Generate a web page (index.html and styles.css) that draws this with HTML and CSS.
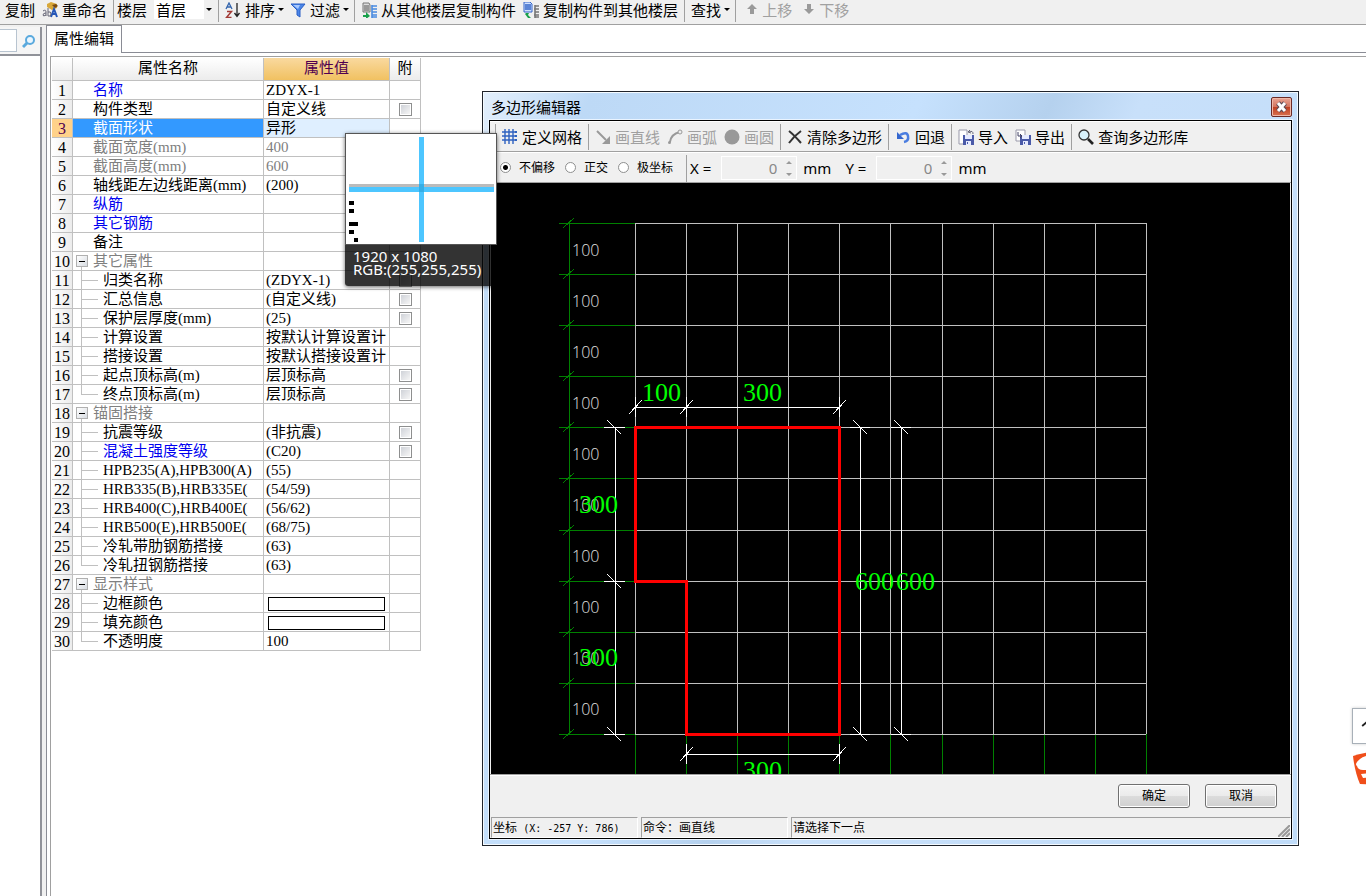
FILE: index.html
```html
<!DOCTYPE html>
<html lang="zh-CN">
<head>
<meta charset="utf-8">
<title>属性编辑</title>
<link rel="stylesheet" href="styles.css">
</head>
<body>
<header class="toolbar main-toolbar">
  <button type="button">复制</button>
  <button type="button"><svg class="icon" viewBox="0 0 16 16"><path d="M5 2l4-2 6 2v4l-5 2-5-3z" fill="#d8a83a"/><path d="M10 3l4-1 2 2-3 2z" fill="#7a4a10"/><path d="M9 15l3-8 3 8M10 12h4" fill="none" stroke="#2456b8" stroke-width="2"/><path d="M1 9q3-2 3 1v4M4 11q-3 0-3 2t3 0M6 6v8M6 10q3-1 3 2t-3 2" fill="none" stroke="#667"/></svg><span>重命名</span></button>
  <span class="sep"></span>
  <label for="floor">楼层</label>
  <span class="floor-box"><select id="floor"><option>首层</option></select><i class="caret"></i></span>
  <span class="sep"></span>
  <button type="button"><svg class="icon" viewBox="0 0 16 16"><path d="M1 7l3-6 3 6M2 5h4" fill="none" stroke="#3465ad" stroke-width="1.3"/><path d="M2 9.500h4.500l-5 6h5" fill="none" stroke="#a23a35" stroke-width="1.500"/><path d="M12 1v13M9.500 11l2.500 3.500 2.500-3.500" fill="none" stroke="#222" stroke-width="1.300"/></svg><span>排序</span><i class="caret"></i></button>
  <button type="button"><svg class="icon" viewBox="0 0 16 16"><path d="M1 2h14l-5 6v7l-3-2V8z" fill="#4b86e8" stroke="#2b5fc4"/><path d="M3 3h7L8 7z" fill="#a9caff"/></svg><span>过滤</span><i class="caret"></i></button>
  <span class="sep"></span>
  <button type="button"><svg class="icon" viewBox="0 0 16 16"><path d="M2 1h6l1 2v7H2z" fill="#ddd" stroke="#777"/><path d="M3 4h5M3 6h5M3 8h5" stroke="#555"/><path d="M2 13h3v-3l4 4-4 3v-2H2z" fill="#19a04b"/><path d="M11 3v13M11 4h5M11 7h5M11 10h5M11 13h5M11 15h5" stroke="#4a8be0" stroke-width="1.600"/></svg><span>从其他楼层复制构件</span></button>
  <button type="button"><svg class="icon" viewBox="0 0 16 16"><path d="M1 0h6l2 2v8H1z" fill="#cfe0ff" stroke="#3465c8"/><path d="M2 3h6M2 5h6M2 7h6" stroke="#3465c8" stroke-width="1.400"/><path d="M8 16H5l-3-4 1-1h3l-1 2z" fill="#19a04b"/><path d="M12 3v13M12 4h4M11 7h5M12 10h4M11 13h5M12 15h4" stroke="#777" stroke-width="1.600"/></svg><span>复制构件到其他楼层</span></button>
  <span class="sep"></span>
  <button type="button"><span>查找</span><i class="caret"></i></button>
  <span class="sep"></span>
  <button type="button" disabled><svg class="icon" viewBox="0 0 16 16"><path d="M10 2l5 5h-3v5H8V7H5z" fill="#9a9a9a"/></svg><span>上移</span></button>
  <button type="button" disabled><svg class="icon" viewBox="0 0 16 16"><path d="M10 12l5-5h-3V2H8v5H5z" fill="#9a9a9a"/></svg><span>下移</span></button>
</header>

<main class="workspace">
  <aside class="nav">
    <div class="search">
      <input type="text" aria-label="搜索">
      <button type="button" aria-label="查找"><svg class="icon" viewBox="0 0 16 16"><circle cx="8" cy="7" r="4" fill="#eaf6ff" stroke="#5aa9dd" stroke-width="2"/><path d="M5 10l-4 4" stroke="#5aa9dd" stroke-width="3"/></svg></button>
    </div>
  </aside>
  <section class="pane">
    <div class="tabs"><h1 class="tab">属性编辑</h1></div>
    <div class="grid-box">
      <table class="props">
        <thead><tr><th class="num"></th><th class="name">属性名称</th><th class="val">属性值</th><th class="att">附</th></tr></thead>
        <tbody>
          <tr><td>1</td><td class="blue">名称</td><td>ZDYX-1</td><td></td></tr>
          <tr><td>2</td><td>构件类型</td><td>自定义线</td><td><input type="checkbox" aria-label="构件类型"></td></tr>
          <tr class="selected"><td>3</td><td>截面形状</td><td>异形</td><td></td></tr>
          <tr class="gray"><td>4</td><td>截面宽度(mm)</td><td>400</td><td></td></tr>
          <tr class="gray"><td>5</td><td>截面高度(mm)</td><td>600</td><td></td></tr>
          <tr><td>6</td><td>轴线距左边线距离(mm)</td><td>(200)</td><td></td></tr>
          <tr><td>7</td><td class="blue">纵筋</td><td></td><td></td></tr>
          <tr><td>8</td><td class="blue">其它钢筋</td><td></td><td></td></tr>
          <tr><td>9</td><td>备注</td><td></td><td></td></tr>
          <tr class="group"><td>10</td><td><button type="button" class="fold" aria-label="折叠"></button>其它属性</td><td></td><td></td></tr>
          <tr class="child"><td>11</td><td>归类名称</td><td>(ZDYX-1)</td><td><input type="checkbox" aria-label="归类名称"></td></tr>
          <tr class="child"><td>12</td><td>汇总信息</td><td>(自定义线)</td><td><input type="checkbox" aria-label="汇总信息"></td></tr>
          <tr class="child"><td>13</td><td>保护层厚度(mm)</td><td>(25)</td><td><input type="checkbox" aria-label="保护层厚度"></td></tr>
          <tr class="child"><td>14</td><td>计算设置</td><td>按默认计算设置计</td><td></td></tr>
          <tr class="child"><td>15</td><td>搭接设置</td><td>按默认搭接设置计</td><td></td></tr>
          <tr class="child"><td>16</td><td>起点顶标高(m)</td><td>层顶标高</td><td><input type="checkbox" aria-label="起点顶标高"></td></tr>
          <tr class="child last"><td>17</td><td>终点顶标高(m)</td><td>层顶标高</td><td><input type="checkbox" aria-label="终点顶标高"></td></tr>
          <tr class="group"><td>18</td><td><button type="button" class="fold" aria-label="折叠"></button>锚固搭接</td><td></td><td></td></tr>
          <tr class="child"><td>19</td><td>抗震等级</td><td>(非抗震)</td><td><input type="checkbox" aria-label="抗震等级"></td></tr>
          <tr class="child"><td>20</td><td class="blue">混凝土强度等级</td><td>(C20)</td><td><input type="checkbox" aria-label="混凝土强度等级"></td></tr>
          <tr class="child"><td>21</td><td>HPB235(A),HPB300(A)</td><td>(55)</td><td></td></tr>
          <tr class="child"><td>22</td><td>HRB335(B),HRB335E(</td><td>(54/59)</td><td></td></tr>
          <tr class="child"><td>23</td><td>HRB400(C),HRB400E(</td><td>(56/62)</td><td></td></tr>
          <tr class="child"><td>24</td><td>HRB500(E),HRB500E(</td><td>(68/75)</td><td></td></tr>
          <tr class="child"><td>25</td><td>冷轧带肋钢筋搭接</td><td>(63)</td><td></td></tr>
          <tr class="child last"><td>26</td><td>冷轧扭钢筋搭接</td><td>(63)</td><td></td></tr>
          <tr class="group"><td>27</td><td><button type="button" class="fold" aria-label="折叠"></button>显示样式</td><td></td><td></td></tr>
          <tr class="child"><td>28</td><td>边框颜色</td><td><button type="button" class="swatch" aria-label="边框颜色"></button></td><td></td></tr>
          <tr class="child"><td>29</td><td>填充颜色</td><td><button type="button" class="swatch" aria-label="填充颜色"></button></td><td></td></tr>
          <tr class="child last"><td>30</td><td>不透明度</td><td>100</td><td></td></tr>
        </tbody>
      </table>
    </div>
  </section>
</main>

<div class="dialog" role="dialog" aria-labelledby="dlg-title">
  <div class="titlebar">
    <h2 id="dlg-title">多边形编辑器</h2>
    <button type="button" class="close" aria-label="关闭"><svg viewBox="0 0 19 18"><path d="M6 5l7 8M13 5l-7 8" stroke="#5b4a55" stroke-width="5"/><path d="M6 5l7 8M13 5l-7 8" stroke="#fff" stroke-width="3"/></svg></button>
  </div>
  <div class="client">
    <div class="toolbar tools">
      <span class="sep"></span>
      <button type="button"><svg class="icon" viewBox="0 0 16 16"><path d="M0 3h15M0 7h15M0 11h15M3 0v15M7 0v15M11 0v15" stroke="#2f62c0" stroke-width="1.400"/><path d="M14 2v2M14 6v2M14 10v2" stroke="#2f62c0" stroke-width="2"/></svg><span>定义网格</span></button>
      <span class="sep"></span>
      <button type="button" disabled><svg class="icon" viewBox="0 0 16 16"><path d="M2 2l9 9" stroke="#999" stroke-width="2"/><path d="M15 7v8H7z" fill="#999"/></svg><span>画直线</span></button>
      <button type="button" disabled><svg class="icon" viewBox="0 0 16 16"><path d="M3 13Q4 5 13 3" fill="none" stroke="#999" stroke-width="2"/><circle cx="2.500" cy="13.500" r="1.500" fill="#999"/><circle cx="13" cy="3" r="2" fill="#eee" stroke="#999"/></svg><span>画弧</span></button>
      <button type="button" disabled><svg class="icon" viewBox="0 0 16 16"><circle cx="8" cy="8" r="7.500" fill="#999"/></svg><span>画圆</span></button>
      <span class="sep"></span>
      <button type="button"><svg class="icon" viewBox="0 0 16 16"><path d="M2 2q5 4 12 12M14 2Q7 7 2 14" fill="none" stroke="#333" stroke-width="2"/></svg><span>清除多边形</span></button>
      <span class="sep"></span>
      <button type="button"><svg class="icon" viewBox="0 0 16 16"><path d="M5 6q7-4 8 1t-4 6" fill="none" stroke="#4a7de0" stroke-width="2.500"/><path d="M2 3v7h7z" fill="#3567cf"/></svg><span>回退</span></button>
      <span class="sep"></span>
      <button type="button"><svg class="icon" viewBox="0 0 16 16"><path d="M1 1h8v14H1z" fill="#fff" stroke="#99a"/><path d="M5 6h11v10H5z" fill="#4a5aa8"/><path d="M7 6h7v4H7zM8 12h5v4H8z" fill="#e6ebff"/><path d="M9 13h1v2H9z" fill="#4a5aa8"/><path d="M11 3q4-2 4 2M10 3l2-2M10 3l3 1" fill="none" stroke="#667"/></svg><span>导入</span></button>
      <button type="button"><svg class="icon" viewBox="0 0 16 16"><path d="M1 1h9v11H1z" fill="#fff" stroke="#99a"/><path d="M5 6h11v10H5z" fill="#4a5aa8"/><path d="M7 6h7v4H7zM8 12h5v4H8z" fill="#e6ebff"/><path d="M9 13h1v2H9z" fill="#4a5aa8"/><path d="M3 3v4h4M5 5l2 2-2 2" fill="none" stroke="#446"/></svg><span>导出</span></button>
      <span class="sep"></span>
      <button type="button"><svg class="icon" viewBox="0 0 16 16"><circle cx="6" cy="6" r="5" fill="#d8f1fb" stroke="#333" stroke-width="1.300"/><path d="M10 10l5 5" stroke="#222" stroke-width="2.600"/></svg><span>查询多边形库</span></button>
    </div>
    <div class="options">
      <label class="radio"><input type="radio" name="mode" checked>不偏移</label>
      <label class="radio"><input type="radio" name="mode">正交</label>
      <label class="radio"><input type="radio" name="mode">极坐标</label>
      <span class="sep"></span>
      <label for="ox">X =</label>
      <span class="spin"><input id="ox" type="text" value="0" disabled><svg viewBox="0 0 8 18"><path d="M1 5l3-3 3 3zM1 14l3 3 3-3z" fill="#999"/></svg></span>
      <span class="unit">mm</span>
      <label for="oy">Y =</label>
      <span class="spin"><input id="oy" type="text" value="0" disabled><svg viewBox="0 0 8 18"><path d="M1 5l3-3 3 3zM1 14l3 3 3-3z" fill="#999"/></svg></span>
      <span class="unit">mm</span>
    </div>
    <svg class="canvas" role="img" aria-label="多边形">
      <g class="thin green">
        <path d="M78 40V551M68 40H144M68 91H144M68 142H144M68 193H144M68 244H144M68 295H144M68 347H144M68 398H144M68 449H144M68 500H144M68 551H144"/>
        <path d="M144 551V591M195 551V591M246 551V591M297 551V591M348 551V591M399 551V591M451 551V591M502 551V591M553 551V591M604 551V591M655 551V591"/>
        <path d="M72 45l11-10M72 96l11-10M72 147l11-10M72 198l11-10M72 249l11-10M72 300l11-10M72 352l11-10M72 403l11-10M72 454l11-10M72 505l11-10M72 556l11-10"/>
      </g>
      <path class="thin silver" d="M144 40V551M195 40V551M246 40V551M297 40V551M348 40V551M399 40V551M451 40V551M502 40V551M553 40V551M604 40V551M655 40V551M144 40H655M144 91H655M144 142H655M144 193H655M144 244H655M144 295H655M144 347H655M144 398H655M144 449H655M144 500H655M144 551H655"/>
      <g class="scale">
        <text x="81" y="73">100</text><text x="81" y="124">100</text><text x="81" y="175">100</text><text x="81" y="226">100</text><text x="81" y="277">100</text>
        <text x="81" y="328">100</text><text x="81" y="379">100</text><text x="81" y="430">100</text><text x="81" y="481">100</text><text x="81" y="532">100</text>
      </g>
      <g class="thin white">
        <path d="M144 224H348M144 214V234M195 214V234M348 214V234M138 231l13-14M189 231l13-14M342 231l13-14"/>
        <path d="M124 244V551M113 244H134M113 398H134M113 551H134M116 237l14 14M116 391l14 14M116 544l14 14"/>
        <path d="M369 244V551M359 244H379M359 551H379M362 237l14 14M362 544l14 14"/>
        <path d="M410 244V551M400 244H420M400 551H420M403 237l14 14M403 544l14 14"/>
        <path d="M195 571H348M195 561V581M348 561V581M189 578l13-14M342 578l13-14"/>
      </g>
      <path class="shape" d="M144 244H348V551H195V398H144Z"/>
      <g class="dims">
        <text x="151" y="218">100</text><text x="252" y="218">300</text>
        <text x="88" y="330">300</text><text x="88" y="483">300</text>
        <text x="364" y="407">600</text><text x="405" y="407">600</text>
        <text x="252" y="596">300</text>
      </g>
    </svg>
    <div class="actions"><button type="button">确定</button><button type="button">取消</button></div>
    <footer class="status">
      <span class="cell">坐标 <span class="mono">(X: -257 Y: 786)</span></span>
      <span class="cell">命令：画直线</span>
      <span class="cell wide">请选择下一点</span>
      <svg class="grip" viewBox="0 0 12 12"><path d="M0 12L12 0M4 12l8-8M8 12l4-4" stroke="#999" stroke-width="2"/></svg>
    </footer>
  </div>
</div>

<div class="magnifier">
  <svg class="lens" viewBox="0 0 150 110"><path d="M3 50h145v4H3z" fill="#bbb"/><path d="M3 53h145v5H3zM73 3h5v105h-5z" fill="#4dc6ff"/><path d="M73 50h5v8h-5z" fill="#35aee6"/><path d="M3 67h5v4H3zM3 75h5v4H3zM3 88h9v4H3zM3 96h5v4H3zM8 104h4v4H8z"/></svg>
  <p>1920 x 1080<br>RGB:(255,255,255)</p>
</div>

<div class="side-widget">
  <button type="button" aria-label="展开"><svg viewBox="0 0 24 36"><path d="M9 18l6-5 6 5" fill="none" stroke="#222" stroke-width="2"/></svg></button>
  <svg class="ime" viewBox="0 0 34 34"><path d="M1 5Q12 1 33 0V34L8 33Q3 22 1 5z" fill="#f04e1a"/><path d="M34 3Q14 3 8 8T5 15q1 4 6 4h23z" fill="#fff"/><path d="M34 9H20q-6 1-6 4h20z" fill="#f04e1a"/><path d="M9 23l25-2v5l-23 1z" fill="#fff"/></svg>
</div>
</body>
</html>
```
FILE: styles.css
```css
* { box-sizing: border-box; }

body {
  margin: 0;
  min-height: 100vh;
  display: flex;
  flex-direction: column;
  position: relative;
  overflow: hidden;
  background: #fff;
  color: #000;
  font: 15px/18px "Noto Sans", "Noto Sans CJK SC", sans-serif;
}

button, input, select { font: inherit; color: inherit; }
h1, h2, p { margin: 0; font-size: 15px; font-weight: 400; }

/* toolbars */
.toolbar { display: flex; align-items: center; background: #f0f0f0; white-space: nowrap; }
.toolbar button {
  display: flex;
  align-items: center;
  gap: 4px;
  padding: 0 3px;
  border: 0;
  background: none;
}
.toolbar button + button { margin-left: 1px; }
.toolbar button:disabled { color: #a0a0a0; }
.icon { width: 16px; height: 16px; flex: none; }
.sep { width: 1px; align-self: stretch; margin: 0 3px; background: #a0a0a0; }
.caret { margin: 0 -1px; border: 3px solid transparent; border-top-color: #000; border-bottom: 0; flex: none; }

.main-toolbar {
  height: 25px;
  padding: 0 2px 5px;
  border-bottom: 1px solid #a0a0a0;
}
.main-toolbar .sep { margin-bottom: -3px; }
.floor-box {
  display: flex;
  align-items: center;
  width: 60px;
  align-self: stretch;
  margin: 0 1px 0 7px;
  padding-right: 3px;
  background: linear-gradient(90deg, #fff 50px, #f0f0f0 50px);
}
.floor-box select { flex: 1; min-width: 0; appearance: none; border: 0; padding: 0 2px; background: none; }

/* workspace */
.workspace { flex: 1; display: flex; background: #f0f0f0; }
.nav { width: 42px; margin-top: 2px; border-right: 2px solid #909299; background: #fff; }
.search {
  display: flex;
  align-items: center;
  gap: 5px;
  height: 29px;
  border-bottom: 2px solid #909299;
  background: #f5f5f5;
}
.search input { width: 17px; height: 23px; border: 1px solid #b8c4d0; border-left: 0; padding: 0; background: #fff; }
.search button { display: flex; padding: 0; border: 0; background: none; }
.pane { flex: 1; display: flex; flex-direction: column; margin-left: 4px; border-left: 1px solid #8a8c95; background: #fff; }
.tabs { display: flex; height: 28px; }
.tabs::after { content: ""; flex: 1; border-bottom: 1px solid #8a8c95; }
.tab { padding: 3px 7px 0; border-top: 1px solid #8a8c95; border-right: 1px solid #8a8c95; }
.grid-box { flex: 1; margin: 3px 0 0 3px; padding: 1px; border: solid #a0a0a0; border-width: 1px 0 0 1px; }

/* property table */
.props {
  width: 369px;
  table-layout: fixed;
  border-spacing: 0;
  font: 15px/17px "Liberation Serif", "Noto Sans CJK SC", serif;
}
.props th, .props td {
  height: 19px;
  padding: 1px 0 0 2px;
  border: solid #c0c0c0;
  border-width: 0 1px 1px 0;
  font-weight: 400;
  text-align: left;
  white-space: nowrap;
  overflow: hidden;
}
.props th { height: 23px; padding: 0 0 1px; text-align: center; background: linear-gradient(#fff, #ececec); }
.props .num { width: 21px; }
.props .name { width: 191px; }
.props .val { width: 126px; background: linear-gradient(#f9d99f, #f1c161); color: #500050; }
.props .att { width: 31px; }
.props td:nth-child(1) { padding: 1px 0 0; text-align: center; font-size: 16px; background: linear-gradient(90deg, #fff, #ececec); }
.props td:nth-child(2) { padding-left: 20px; }
.props td:nth-child(4) { padding: 0; text-align: center; }
.props .blue { color: #0000f0; }
.props .gray td:not(:first-child), .props .group td:nth-child(2) { color: #808080; }
.props .selected td:nth-child(1) { background: #ffd28a; color: #500050; }
.props .selected td:nth-child(2) { background: #3399ff; color: #fff; }
.props .selected td:nth-child(3) { background: #dfefff; }
.props .group td:nth-child(2) {
  padding-left: 3px;
  background: linear-gradient(#c0c0c0, #c0c0c0) 8px 100% / 1px 4px no-repeat;
}
.props .child td:nth-child(2) {
  padding-left: 30px;
  background:
    linear-gradient(#c0c0c0, #c0c0c0) 8px 0 / 1px 100% no-repeat,
    linear-gradient(#c0c0c0, #c0c0c0) 8px 9px / 17px 1px no-repeat;
}
.props .last td:nth-child(2) { background-size: 1px 9px, 17px 1px; }
.fold {
  width: 12px;
  height: 12px;
  margin: 2px 5px 3px 0;
  padding: 0;
  vertical-align: top;
  border: 1px solid #b0b0b0;
  background: linear-gradient(#000, #000) center / 6px 1px no-repeat, linear-gradient(135deg, #fff, #d8dce2);
}
.props input {
  display: block;
  appearance: none;
  width: 13px;
  height: 13px;
  margin: 0 auto;
  border: 1px solid #8e8f8f;
  background: linear-gradient(135deg, #cfd2d8, #f6f6f6) content-box;
  padding: 1px;
}
.swatch { display: block; width: 117px; height: 14px; margin: 0 2px; padding: 0; border: 1px solid #000; background: #fff; }

/* polygon editor window */
.dialog {
  position: absolute;
  left: 482px;
  top: 91px;
  width: 817px;
  padding: 0 6px 6px;
  border: 1px solid #20242c;
  background: linear-gradient(115deg, #e3effc 0, #bdd9f6 100px, #c6e1fd 400px, #b5d1ee 520px, #c8e0fa 600px, #c0dcf9 100%);
  box-shadow: inset 0 0 0 1px #f4faff;
}
.titlebar { display: flex; align-items: center; justify-content: space-between; height: 28px; padding: 2px 0 0 2px; }
.close {
  display: flex;
  width: 21px;
  height: 20px;
  padding: 0;
  border: 1px solid #6b2a26;
  border-radius: 2px;
  background: linear-gradient(#e9a494, #d4755f 48%, #bf3f22 50%, #d8704e);
  box-shadow: inset 0 0 0 1px #f0b8a8;
}
.client { border: 1px solid #000; background: #f0f0f0; box-shadow: 0 0 0 1px #eaf4ff; }
.tools { height: 31px; padding: 1px 2px 0; border: solid #a0a0a0; border-width: 0 0 1px; box-shadow: inset 0 1px #fff; }
.tools .sep { margin-top: 2px; margin-bottom: 1px; }
.options { display: flex; align-items: center; height: 31px; padding-left: 10px; border-bottom: 1px solid #a0a0a0; border-top: 1px solid #fff; }
.radio { display: flex; align-items: center; gap: 8px; margin-right: 10px; font-size: 12px; }
.radio input {
  appearance: none;
  width: 11px;
  height: 11px;
  margin: 0;
  border: 1px solid #8e8f8f;
  border-radius: 50%;
  background: #fff;
}
.radio input:checked { background: radial-gradient(#000 2px, #fff 3px); }
.options .sep { margin: 2px 3px 0; }
.spin { display: flex; align-items: center; width: 76px; height: 24px; margin: 0 6px 0 10px; padding-right: 3px; border: 1px solid #fff; }
.spin input { flex: 1; min-width: 0; padding: 0 8px 0 0; border: 0; background: none; text-align: right; color: #888; }
.spin svg { width: 8px; height: 18px; }
.unit { margin-right: 14px; }

.canvas { display: block; width: 100%; height: 591px; border-left: 1px solid #f0f0f0; border-right: 1px solid #f0f0f0; background: #000; }
.thin { fill: none; stroke-width: 1px; shape-rendering: crispEdges; }
.green { stroke: #008000; }
.silver { stroke: #c0c0c0; }
.white { stroke: #fff; }
.shape { fill: none; stroke: #f00; stroke-width: 3px; shape-rendering: crispEdges; }
.scale { fill: #e0e0e0; font: 300 16px "Open Sans", sans-serif; }
.dims { fill: #0f0; font: 26px "Liberation Serif", serif; }

.actions { display: flex; justify-content: flex-end; gap: 15px; padding: 9px 14px; border-top: 1px solid #a0a0a0; box-shadow: inset 0 1px #fff; }
.actions button {
  width: 72px;
  height: 24px;
  padding: 0;
  border: 1px solid #707070;
  border-radius: 3px;
  background: linear-gradient(#f4f4f4, #ebebeb 48%, #dcdcdc 50%, #cfcfcf);
  box-shadow: inset 0 0 0 1px #fff;
  font-size: 12px;
}
.status { display: flex; gap: 3px; height: 21px; padding-left: 1px; position: relative; font-size: 12px; }
.cell { width: 147px; padding: 1px 0 0 1px; border: 1px solid #a0a0a0; border-right-color: #fff; border-bottom-color: #fff; white-space: nowrap; }
.wide { flex: 1; width: auto; }
.mono { margin-left: 3px; font: 10px "DejaVu Sans Mono", monospace; }
.grip { position: absolute; right: 1px; bottom: 1px; width: 12px; height: 12px; }

/* colour-picker magnifier */
.magnifier {
  position: absolute;
  left: 345px;
  top: 133px;
  width: 152px;
  border-radius: 3px;
  background: rgba(0, 0, 0, 0.8);
  box-shadow: 0 1px 4px rgba(0, 0, 0, 0.6);
  color: #fff;
}
.lens { display: block; width: 152px; height: 112px; border: 1px solid #555; background: #fff; }
.magnifier p { padding: 5px 8px 10px; line-height: 13px; }

/* docked widget at the right edge */
.side-widget { position: absolute; left: 1352px; top: 708px; width: 34px; }
.side-widget button { display: block; width: 34px; height: 36px; padding: 0; border: 1px solid #a8b0b8; background: #fff; box-shadow: 0 0 3px #ccc; }
.side-widget button svg { display: block; width: 24px; height: 34px; }
.ime { display: block; width: 34px; height: 34px; margin-top: 7px; }
```
